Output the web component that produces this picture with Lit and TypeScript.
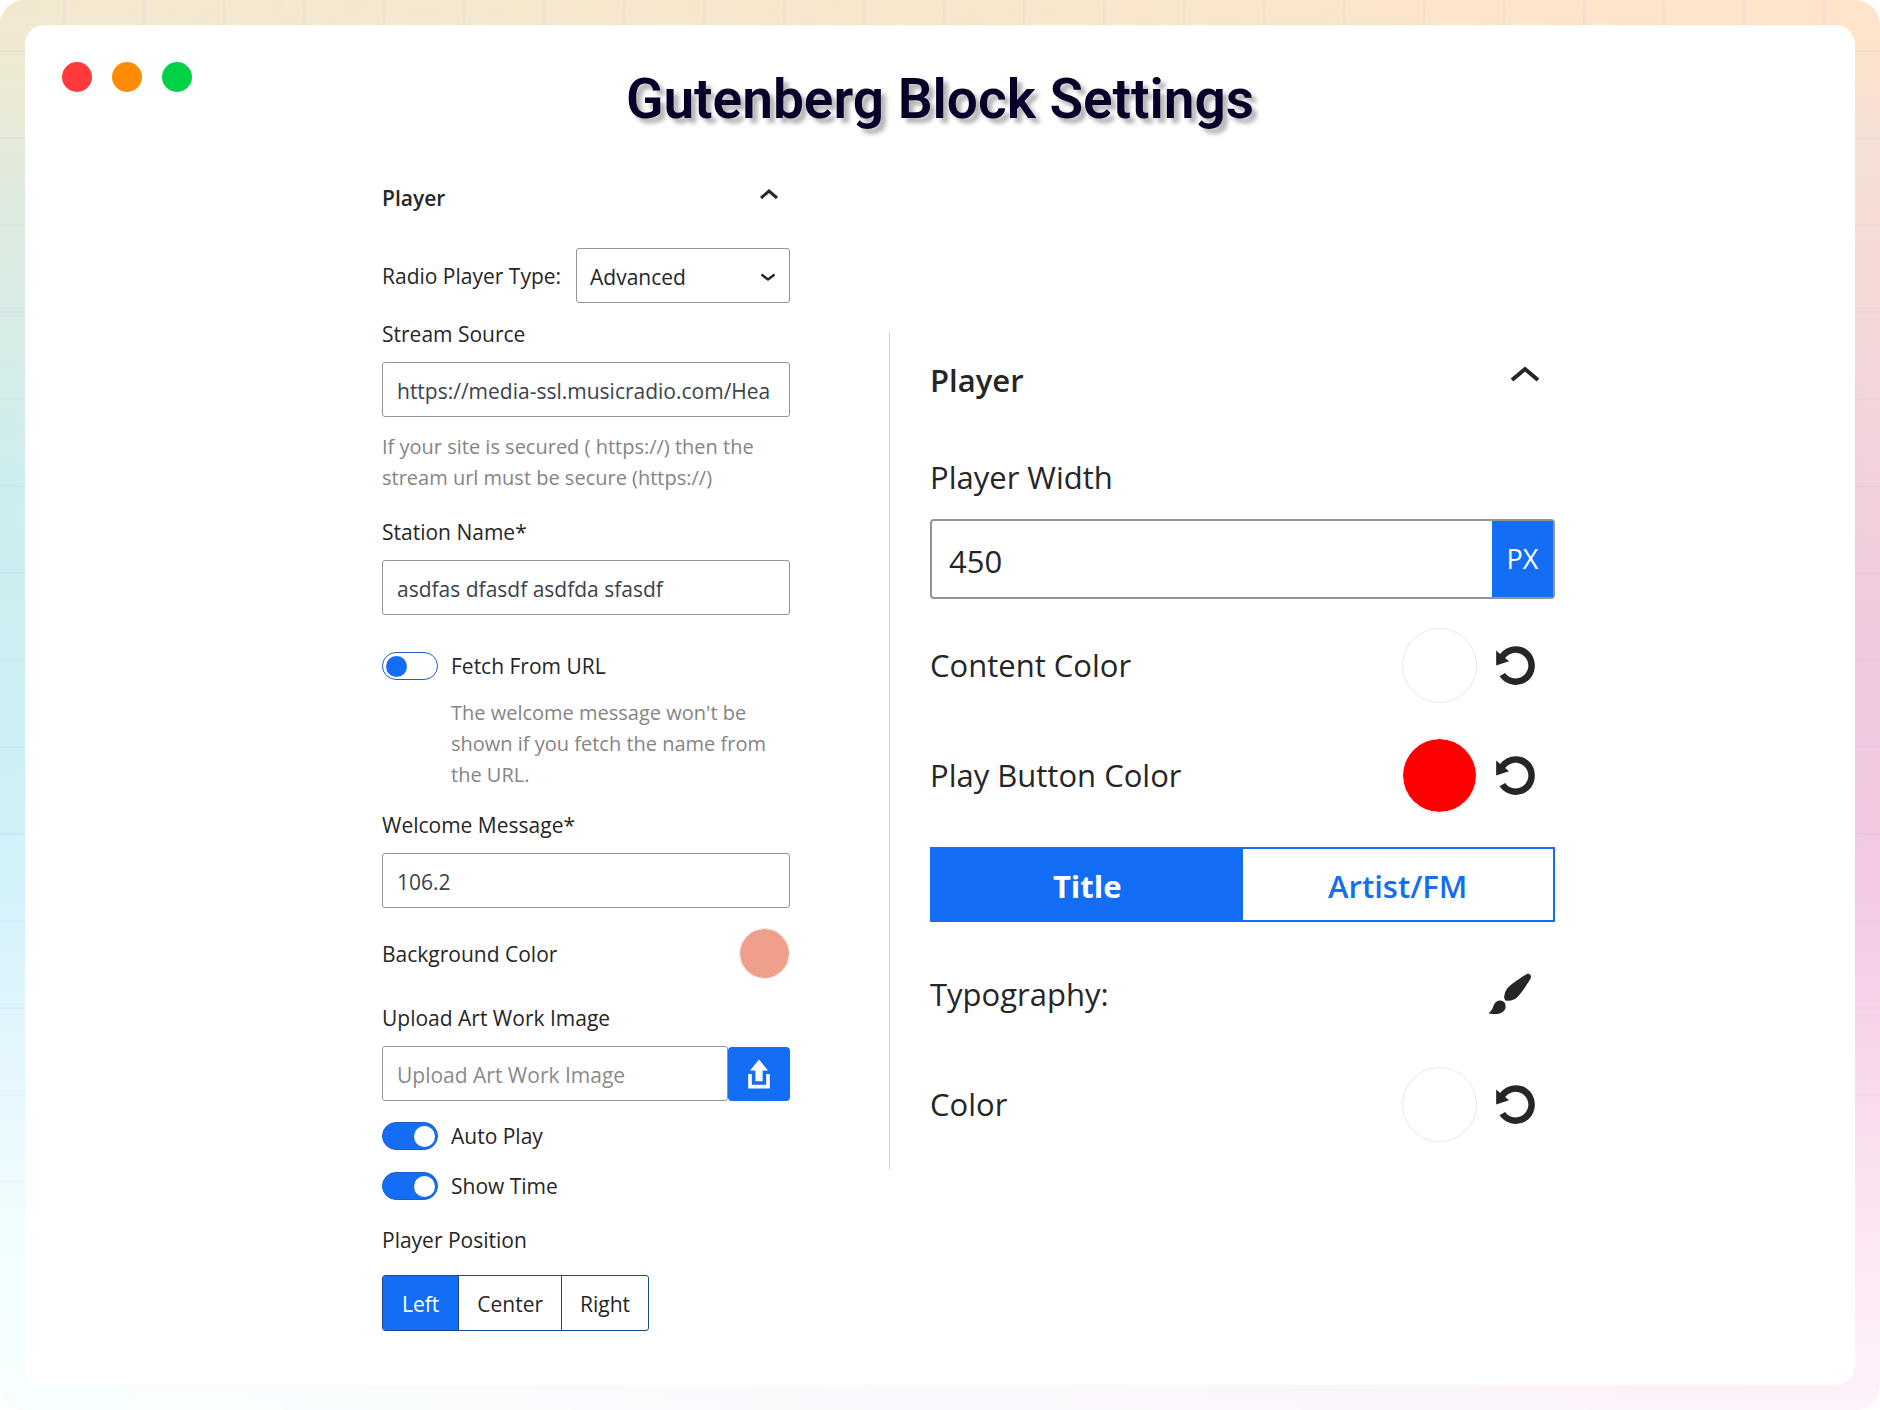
import { LitElement, html, css, svg } from "lit";
import { customElement, property, state } from "lit/decorators.js";
import { classMap } from "lit/directives/class-map.js";

const undoIcon = svg`<path d="M10.25 1.02c5.1 0 8.75 4.04 8.75 9s-3.65 9-8.75 9c-3.2 0-6.02-1.59-7.68-3.99l2.59-1.52c1.1 1.5 2.86 2.51 4.84 2.51 3.3 0 6-2.79 6-6s-2.7-6-6-6c-1.97 0-3.72 1-4.82 2.49L7 8.02l-6 2v-7L2.89 4.6c1.69-2.17 4.36-3.58 7.36-3.58z"/>`;
const brushIcon = svg`<path d="M18.33 3.57s.27-.8-.31-1.36c-.53-.52-1.22-.24-1.22-.24-.61.3-5.76 3.47-7.67 5.57-.86.96-2.06 3.79-1.09 4.82.92.98 3.96-.17 4.79-1 2.06-2.06 5.21-7.17 5.5-7.79zM1.4 17.65c2.37-1.56 1.46-3.41 3.23-4.64.93-.65 2.22-.62 3.08.29.63.67.8 2.57-.16 3.46-1.57 1.45-4 1.55-6.15.89z"/>`;
const uploadIcon = svg`<path d="M8 14V8H5l5-6 5 6h-3v6H8zm-2 2v-6H4v8h12v-8h-2v6H6z"/>`;

const shared = css`
  * {
    box-sizing: border-box;
  }
  button,
  input,
  select {
    font: inherit;
    color: inherit;
    margin: 0;
  }
  button {
    cursor: pointer;
    padding: 0;
    border: 0;
    background: none;
  }
  svg {
    display: block;
    fill: currentColor;
  }
  .stroke {
    fill: none;
    stroke: currentColor;
  }
  .head {
    display: flex;
    align-items: center;
    justify-content: space-between;
    width: 100%;
    height: 50px;
    font-weight: 600;
    text-align: left;
  }
  .row {
    display: flex;
    align-items: center;
    justify-content: space-between;
  }
  .swatch {
    appearance: none;
    flex: none;
    padding: 0;
    border: 1px solid #e6e6e6;
    border-radius: 50%;
    background: none;
    overflow: hidden;
    cursor: pointer;
  }
  .swatch::-webkit-color-swatch-wrapper {
    padding: 0;
  }
  .swatch::-webkit-color-swatch {
    border: 0;
    border-radius: 50%;
  }
`;

/** Stream and station settings, the narrow panel. */
@customElement("station-panel")
export class StationPanel extends LitElement {
  @state() private position = "Left";

  static styles = [
    shared,
    css`
      :host {
        display: block;
        font-size: 21px;
        line-height: 30px;
      }
      .head {
        padding-right: 10px;
        margin-bottom: 25px;
      }
      .head svg {
        margin-bottom: 8px;
      }
      label,
      .caption {
        display: block;
      }
      .type {
        display: flex;
        align-items: center;
        gap: 15px;
        margin-bottom: 16px;
      }
      .type label {
        flex: none;
      }
      .select {
        position: relative;
        flex: 1;
      }
      .select select {
        appearance: none;
        display: block;
        width: 100%;
        padding: 2px 40px 0 13px;
      }
      .select svg {
        position: absolute;
        right: 13px;
        top: 24px;
        pointer-events: none;
      }
      .box {
        height: 55px;
        border: 1px solid #949494;
        border-radius: 3px;
        background: #fff;
        outline: 0;
      }
      input.box {
        display: block;
        width: 100%;
        min-width: 0;
        padding: 2px 14px 0;
        margin-top: 13px;
        color: #3c434a;
      }
      .box::placeholder {
        color: #8a8a8a;
        opacity: 1;
      }
      .help {
        margin: 14px 0 0;
        font-size: 20px;
        line-height: 31px;
        color: #858585;
      }
      .stream {
        margin-bottom: 24px;
      }
      .field {
        margin-bottom: 20px;
      }
      .name {
        margin-bottom: 36px;
      }
      .toggle {
        display: grid;
        grid-template-columns: 56px 1fr;
        gap: 2px 13px;
        align-items: center;
        margin-bottom: 20px;
      }
      .toggle .help {
        grid-column: 2;
      }
      .switch {
        appearance: none;
        display: flex;
        align-items: center;
        width: 56px;
        height: 28px;
        padding: 0 3px;
        border: 1px solid #1f5fc4;
        border-radius: 14px;
        background: #fff;
        cursor: pointer;
      }
      .switch::before {
        content: "";
        width: 21px;
        height: 21px;
        border-radius: 50%;
        background: #146ef5;
      }
      .switch:checked {
        justify-content: flex-end;
        padding: 0 2px;
        background: #146ef5;
      }
      .switch:checked::before {
        background: #fff;
      }
      .swatch {
        width: 51px;
        height: 51px;
      }
      .bg {
        margin-bottom: 24px;
      }
      .upload {
        display: flex;
        align-items: flex-end;
        margin-bottom: 20px;
      }
      .upload button {
        flex: none;
        display: grid;
        place-items: center;
        width: 62px;
        height: 54px;
        border-radius: 4px;
        background: #146ef5;
        color: #fff;
      }
      .caption {
        margin-top: 24px;
      }
      .group {
        display: inline-flex;
        margin-top: 20px;
        border: 1px solid #1d4a8f;
        border-radius: 3px;
        overflow: hidden;
      }
      .group button {
        height: 54px;
        padding: 2px 19px 0;
      }
      .group button + button {
        border-left: 1px solid #1d4a8f;
        padding: 2px 18px 0;
      }
      .group .on {
        background: #146ef5;
        color: #fff;
      }
    `,
  ];

  private toggle(id: string, text: string) {
    return html`<div class="toggle">
      <input class="switch" type="checkbox" role="switch" id=${id} checked />
      <label for=${id}>${text}</label>
    </div>`;
  }

  render() {
    return html`
      <button class="head" aria-expanded="true">
        Player
        <svg width="22" height="14" viewBox="0 0 22 14" aria-hidden="true">
          <path class="stroke" stroke-width="3" d="M3 11l8-7 8 7" />
        </svg>
      </button>

      <div class="type">
        <label for="type">Radio Player Type:</label>
        <div class="select">
          <select class="box" id="type">
            <option>Advanced</option>
          </select>
          <svg width="18" height="12" viewBox="0 0 18 12" aria-hidden="true">
            <path class="stroke" stroke-width="2.4" d="M2.5 2.5L9 7.5l6.500-5" />
          </svg>
        </div>
      </div>

      <div class="stream">
        <label for="stream">Stream Source</label>
        <input class="box" id="stream" type="text" value="https://media-ssl.musicradio.com/Hea" />
        <p class="help">If your site is secured ( https://) then the stream url must be secure (https://)</p>
      </div>

      <div class="name">
        <label for="station">Station Name*</label>
        <input class="box" id="station" type="text" value="asdfas dfasdf asdfda sfasdf" />
      </div>

      <div class="toggle">
        <input class="switch" type="checkbox" role="switch" id="fetch" />
        <label for="fetch">Fetch From URL</label>
        <p class="help">The welcome message won't be shown if you fetch the name from the URL.</p>
      </div>

      <div class="field">
        <label for="welcome">Welcome Message*</label>
        <input class="box" id="welcome" type="text" value="106.2" />
      </div>

      <div class="row bg">
        <label for="bg">Background Color</label>
        <input class="swatch" id="bg" type="color" value="#f09f8b" />
      </div>

      <label for="art">Upload Art Work Image</label>
      <div class="upload">
        <input class="box" id="art" type="text" placeholder="Upload Art Work Image" />
        <button aria-label="Upload">
          <svg width="36" height="36" viewBox="0 0 20 20" aria-hidden="true">${uploadIcon}</svg>
        </button>
      </div>

      ${this.toggle("auto", "Auto Play")} ${this.toggle("time", "Show Time")}

      <span class="caption" id="position">Player Position</span>
      <div class="group" role="group" aria-labelledby="position">
        ${["Left", "Center", "Right"].map(
          (p) => html`<button
            class=${classMap({ on: p === this.position })}
            aria-pressed=${p === this.position}
            @click=${() => (this.position = p)}
          >${p}</button>`
        )}
      </div>
    `;
  }
}

/** One line with a colour swatch and its reset button. */
@customElement("color-row")
export class ColorRow extends LitElement {
  @property() label = "";
  @property() value = "#ffffff";

  static styles = [
    shared,
    css`
      :host {
        display: block;
      }
      .row {
        height: 76px;
      }
      .tools {
        display: flex;
        align-items: center;
        gap: 17px;
        padding-right: 18px;
      }
      .swatch {
        width: 75px;
        height: 75px;
      }
    `,
  ];

  render() {
    return html`<div class="row">
      <label for="color">${this.label}</label>
      <div class="tools">
        <input class="swatch" id="color" type="color" .value=${this.value} />
        <button aria-label="Reset">
          <svg width="43" height="43" viewBox="0 0 20 20" aria-hidden="true">${undoIcon}</svg>
        </button>
      </div>
    </div>`;
  }
}

/** Width, colours and typography, the wide panel. */
@customElement("style-panel")
export class StylePanel extends LitElement {
  @state() private tab = "Title";

  static styles = [
    shared,
    css`
      :host {
        display: block;
        font-size: 31px;
        line-height: 44px;
      }
      .head {
        padding-right: 14px;
        margin-bottom: 50px;
      }
      .head svg {
        margin-bottom: 12px;
      }
      .width {
        display: flex;
        height: 80px;
        margin: 20px 0 28px;
        border: 2px solid #949494;
        border-radius: 4px;
      }
      .width input {
        flex: 1;
        min-width: 0;
        padding: 4px 17px 0;
        border: 0;
        outline: 0;
        background: none;
      }
      .width button {
        width: 61px;
        background: #146ef5;
        color: #fff;
        font-size: 27px;
      }
      .list {
        display: grid;
        gap: 34px;
      }
      .tabs {
        display: grid;
        grid-template-columns: 1fr 1fr;
        height: 75px;
        border: 2px solid #146ef5;
      }
      .tabs button {
        padding-top: 2px;
        color: #146ef5;
        font-weight: 600;
      }
      .tabs .on {
        background: #146ef5;
        color: #fff;
        font-weight: 700;
      }
      .type {
        height: 76px;
        padding-right: 20px;
      }
    `,
  ];

  render() {
    return html`
      <button class="head" aria-expanded="true">
        Player
        <svg width="32" height="20" viewBox="0 0 32 20" aria-hidden="true">
          <path class="stroke" stroke-width="4" d="M3 16L16 5l13 11" />
        </svg>
      </button>
      <label for="width">Player Width</label>
      <div class="width">
        <input id="width" type="text" inputmode="numeric" value="450" />
        <button>PX</button>
      </div>
      <div class="list">
        <color-row label="Content Color"></color-row>
        <color-row label="Play Button Color" value="#ff0000"></color-row>
        <div class="tabs" role="tablist">
          ${["Title", "Artist/FM"].map(
            (t) => html`<button
              role="tab"
              class=${classMap({ on: t === this.tab })}
              aria-selected=${t === this.tab}
              @click=${() => (this.tab = t)}
            >${t}</button>`
          )}
        </div>
        <div class="row type">
          <span id="typo">Typography:</span>
          <button aria-labelledby="typo">
            <svg width="50" height="50" viewBox="0 0 20 20" aria-hidden="true">${brushIcon}</svg>
          </button>
        </div>
        <color-row label="Color"></color-row>
      </div>
    `;
  }
}

@customElement("app-root")
export class AppRoot extends LitElement {
  static styles = css`
    * {
      box-sizing: border-box;
    }
    :host {
      display: block;
      background: #fff;
      color: #262626;
      font-family: "Open Sans", "Noto Sans", sans-serif;
    }
    .frame {
      display: flex;
      position: relative;
      isolation: isolate;
      min-height: 100vh;
      padding: 25px;
      border-radius: 25px;
      overflow: hidden;
      background: linear-gradient(#ffe5c9, #f6e0d4 10%, #f3d5da 28%, #f0cade 45%, #f4c9e3 62%, #f7d4ea 73%, #fbe3f1 84%, #feeff8 96%, #fdf3fb);
    }
    .frame::before {
      content: "";
      position: absolute;
      inset: 0;
      z-index: -1;
      background: linear-gradient(#f3e8cf, #ebebd5 7%, #e0eade 13%, #cdeeee 34%, #cbeff5 52%, #d5f2fb 64%, #e6f7fd 77%, #f2fefe 88%, #f8ffff);
      -webkit-mask-image: linear-gradient(to right, #000, transparent);
      mask-image: linear-gradient(to right, #000, transparent);
    }
    .frame::after {
      content: "";
      position: absolute;
      inset: 0;
      z-index: -1;
      background:
        linear-gradient(to right, rgba(190, 190, 240, 0.14) 2px, transparent 2px) 63px 0 / 80px 100%,
        linear-gradient(rgba(170, 170, 240, 0.12) 2px, transparent 2px) 0 50px / 100% 87px;
      -webkit-mask-image: linear-gradient(#000 70%, transparent 90%);
      mask-image: linear-gradient(#000 70%, transparent 90%);
    }
    .card {
      flex: 1;
      min-width: 0;
      padding-bottom: 40px;
      border-radius: 20px;
      background: #fff;
    }
    header {
      display: grid;
      grid-template-columns: 1fr auto 1fr;
      align-items: start;
      padding: 37px 37px 0;
      height: 148px;
    }
    .dots {
      display: flex;
      gap: 20px;
    }
    .dot {
      width: 30px;
      height: 30px;
      border-radius: 50%;
    }
    .red {
      background: #ff3a3a;
    }
    .orange {
      background: #ff8c00;
    }
    .green {
      background: #00d146;
    }
    h1 {
      margin: 0;
      font: 600 55px/74px Roboto, sans-serif;
      color: #070028;
      text-shadow: 5px 5px 4px rgba(0, 0, 0, 0.3);
    }
    main {
      display: grid;
      grid-template-columns: 357fr 408fr 99fr 666fr 300fr;
      align-items: start;
    }
    station-panel {
      grid-column: 2;
    }
    style-panel {
      grid-column: 4;
      margin-top: 159px;
      padding: 23px 0 28px 40px;
      border-left: 1px solid #d4d4d4;
    }
  `;

  render() {
    return html`<div class="frame">
      <div class="card">
        <header>
          <div class="dots">
            <span class="dot red"></span>
            <span class="dot orange"></span>
            <span class="dot green"></span>
          </div>
          <h1>Gutenberg Block Settings</h1>
        </header>
        <main>
          <station-panel></station-panel>
          <style-panel></style-panel>
        </main>
      </div>
    </div>`;
  }
}
